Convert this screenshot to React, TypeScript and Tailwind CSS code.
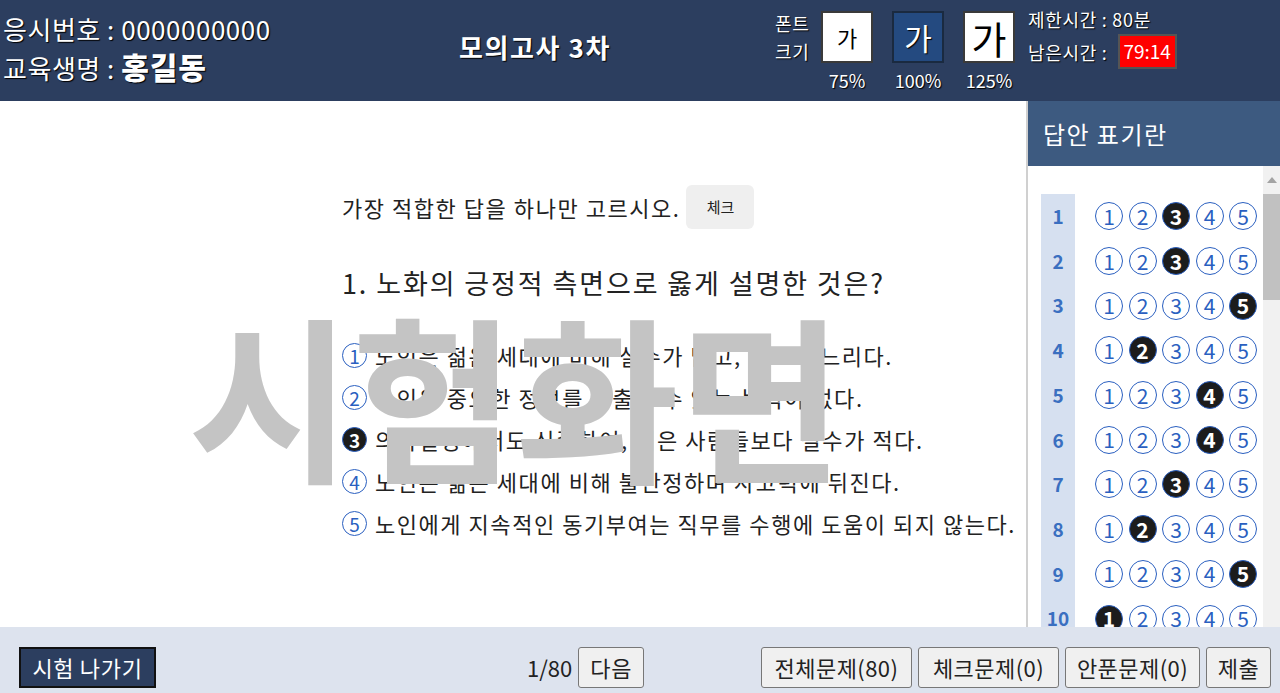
import React from 'react';

const answers = [3, 3, 5, 2, 4, 4, 3, 2, 5, 1];

const options = [
  '노인은 젊은 세대에 비해 실수가 많고, 사고가 느리다.',
  '노인은 중요한 정보를 추출할 수 있는 능력이 없다.',
  '의사결정에서도 신중하여, 젊은 사람들보다 실수가 적다.',
  '노인은 젊은 세대에 비해 불안정하며 사고력에 뒤진다.',
  '노인에게 지속적인 동기부여는 직무를 수행에 도움이 되지 않는다.',
];

const Bubble = ({ n, filled, size }: { n: number; filled: boolean; size: 'sm' | 'lg' }) => {
  const dim = size === 'lg' ? 'w-[28px] h-[28px] text-[21px]' : 'w-[25px] h-[25px] text-[19px]';
  return (
    <div
      className={`${dim} shrink-0 rounded-full border-[1.5px] flex items-center justify-center leading-none tracking-normal ${
        filled ? 'bg-[#1c1c1c] border-[#2a5fc0] text-white font-bold' : 'bg-white border-[#2a5fc0] text-[#2a5fc0]'
      }`}
    >
      {n}
    </div>
  );
};

export default function App() {
  return (
    <div className="w-[1280px] h-[693px] flex flex-col overflow-hidden font-['Noto_Sans_CJK_KR',sans-serif] bg-white">
      {/* 상단 헤더 */}
      <header className="h-[101px] shrink-0 bg-[#2c3e5f] flex items-start text-white [text-shadow:1px_1px_1px_#000]">
        <div className="w-[430px] pl-[3px] pt-[10px]">
          <div className="text-[26px] leading-[37px] tracking-[0.02em]">응시번호 : 0000000000</div>
          <div className="text-[26px] leading-[38px] tracking-[0.02em]">
            교육생명 : <span className="font-black text-[30px] tracking-[0.03em]">홍길동</span>
          </div>
        </div>
        <div className="w-[210px] text-center pt-[28px] text-[26px] font-bold leading-[38px] tracking-[0.06em] whitespace-nowrap">모의고사 3차</div>
        <div className="ml-[135px] flex items-start">
          <div className="pt-[9px] text-[18px] leading-[28px] w-[46px] tracking-[0.04em]">
            <div>폰트</div>
            <div>크기</div>
          </div>
          <div className="flex gap-[19px] pt-[11px]">
            <div className="flex flex-col items-center w-[52px]">
              <div className="w-[52px] h-[52px] bg-white border-2 border-[#3a3a3a] flex items-center justify-center text-[22px] text-black [text-shadow:none]">가</div>
              <div className="text-[18px] leading-[34px]">75%</div>
            </div>
            <div className="flex flex-col items-center w-[52px]">
              <div className="w-[52px] h-[52px] bg-[#244a80] border-2 border-[#1a2a40] flex items-center justify-center text-[30px] text-white">가</div>
              <div className="text-[18px] leading-[34px]">100%</div>
            </div>
            <div className="flex flex-col items-center w-[52px]">
              <div className="w-[52px] h-[52px] bg-white border-2 border-[#3a3a3a] flex items-center justify-center text-[38px] text-black [text-shadow:none]">가</div>
              <div className="text-[18px] leading-[34px]">125%</div>
            </div>
          </div>
          <div className="ml-[13px] pt-[5px] text-[18px] tracking-[0.04em] whitespace-nowrap">
            <div className="leading-[28px]">제한시간 : 80분</div>
            <div className="flex items-center mt-[1px]">
              <span className="leading-[34px]">남은시간 :</span>
              <span className="ml-[10px] w-[59px] h-[35px] bg-[#ff0000] border-2 border-[#555] flex items-center justify-center text-[19px] tracking-normal [text-shadow:none]">79:14</span>
            </div>
          </div>
        </div>
      </header>

      <div className="flex-1 flex min-h-0">
        {/* 문제 영역 */}
        <main className="relative flex-1 pl-[342px] pt-[84px] overflow-hidden">
          <div className="flex items-center gap-[6px]">
            <span className="text-[22px] text-[#222] tracking-[0.07em]">가장 적합한 답을 하나만 고르시오.</span>
            <span className="w-[68px] h-[44px] rounded-md bg-[#efefef] flex items-center justify-center text-[15px] text-[#222]">체크</span>
          </div>
          <h2 className="mt-[35px] text-[27px] text-[#222] leading-[38px] tracking-[0.07em] whitespace-nowrap">1. 노화의 긍정적 측면으로 옳게 설명한 것은?</h2>
          <ol className="mt-[32px] flex flex-col">
            {options.map((o, i) => (
              <li key={i} className="flex items-center gap-[8px] h-[42px] text-[22px] text-[#222] tracking-[0.07em] whitespace-nowrap">
                <Bubble n={i + 1} filled={i === 2} size="sm" />
                <span>{o}</span>
              </li>
            ))}
          </ol>
          <div className="absolute left-[188px] top-[203px] text-[178px] font-bold leading-none text-[#c4c4c4] whitespace-nowrap">
            시험화면
          </div>
        </main>

        {/* 답안 표기란 */}
        <aside className="w-[254px] shrink-0 border-l-2 border-[#d0d0d0] flex flex-col">
          <div className="h-[65px] bg-[#3d5a80] text-white text-[24px] tracking-[0.06em] flex items-center pl-[15px] shrink-0">답안 표기란</div>
          <div className="flex-1 flex min-h-0">
            <div className="flex-1 pt-[28px] pl-[13px] overflow-hidden">
              <div className="flex flex-col">
                {answers.map((a, i) => (
                  <div key={i} className="flex items-center h-[44.7px] shrink-0">
                    <div className="w-[34px] h-full bg-[#d6e0f0] flex items-center justify-center text-[19px] font-bold text-[#3a6fc0]">
                      {i + 1}
                    </div>
                    <div className="ml-[20px] flex gap-[5.5px]">
                      {[1, 2, 3, 4, 5].map((n) => (
                        <Bubble key={n} n={n} filled={n === a} size="lg" />
                      ))}
                    </div>
                  </div>
                ))}
              </div>
            </div>
            <div className="w-[17px] shrink-0 bg-[#f1f1f1] flex flex-col">
              <div className="h-[28px] flex items-center justify-center">
                <svg width="10" height="6" viewBox="0 0 10 6">
                  <path d="M0 6 L5 0 L10 6 Z" fill="#a3a3a3" />
                </svg>
              </div>
              <div className="h-[106px] bg-[#c1c1c1]" />
            </div>
          </div>
        </aside>
      </div>

      {/* 하단 */}
      <footer className="h-[66px] shrink-0 bg-[#dde3ee] flex items-start pt-[20px] pl-[19px] pr-[9px] text-[22px]">
        <button className="h-[41px] w-[137px] bg-[#2c3e5f] border-2 border-[#111] text-white tracking-[0.03em]">시험 나가기</button>
        <div className="ml-[371px] flex items-center h-[41px] text-[#222]">
          <span>1/80</span>
          <button className="ml-[6px] h-[41px] w-[66px] bg-[#f0f0f0] border border-[#777] rounded-[3px] tracking-[0.04em]">다음</button>
        </div>
        <div className="ml-auto flex gap-[6px] text-[#222] tracking-[0.02em]">
          <button className="h-[41px] w-[151px] bg-[#f0f0f0] border border-[#777] rounded-[3px]">전체문제(80)</button>
          <button className="h-[41px] w-[141px] bg-[#f0f0f0] border border-[#777] rounded-[3px]">체크문제(0)</button>
          <button className="h-[41px] w-[135px] bg-[#f0f0f0] border border-[#777] rounded-[3px]">안푼문제(0)</button>
          <button className="h-[41px] w-[65px] bg-[#f0f0f0] border border-[#777] rounded-[3px]">제출</button>
        </div>
      </footer>
    </div>
  );
}
